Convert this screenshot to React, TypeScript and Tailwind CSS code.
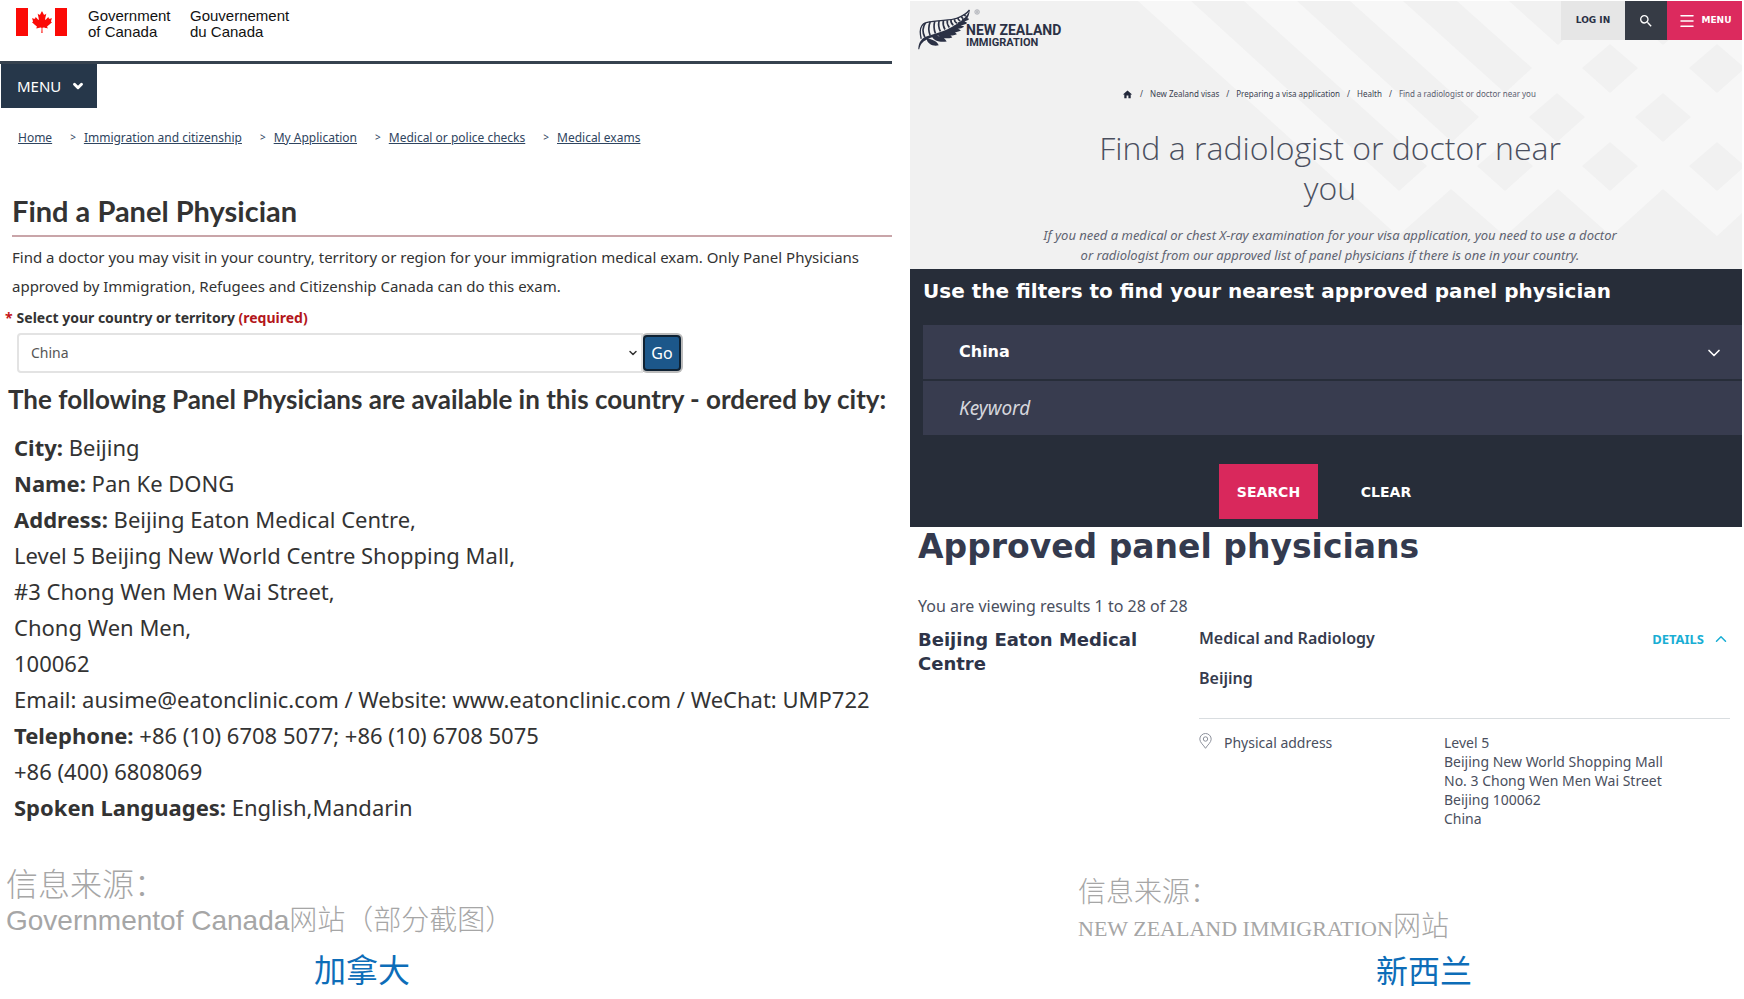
import React from "react"
import { FaCanadianMapleLeaf } from "react-icons/fa"
import { MdHome, MdSearch } from "react-icons/md"
import { ChevronDown, ChevronUp, Menu } from "lucide-react"

const canadaCrumbs = [
  "Home",
  "Immigration and citizenship",
  "My Application",
  "Medical or police checks",
  "Medical exams",
]

const nzCrumbs = ["New Zealand visas", "Preparing a visa application", "Health"]

const physician: { label?: string; value: string }[] = [
  { label: "City:", value: "Beijing" },
  { label: "Name:", value: "Pan Ke DONG" },
  { label: "Address:", value: "Beijing Eaton Medical Centre," },
  { value: "Level 5 Beijing New World Centre Shopping Mall," },
  { value: "#3 Chong Wen Men Wai Street," },
  { value: "Chong Wen Men," },
  { value: "100062" },
  { value: "Email: ausime@eatonclinic.com / Website: www.eatonclinic.com / WeChat: UMP722" },
  { label: "Telephone:", value: "+86 (10) 6708 5077; +86 (10) 6708 5075" },
  { value: "+86 (400) 6808069" },
  { label: "Spoken Languages:", value: "English,Mandarin" },
]

const nzAddress = [
  "Level 5",
  "Beijing New World Shopping Mall",
  "No. 3 Chong Wen Men Wai Street",
  "Beijing 100062",
  "China",
]

const CanadaFlag: React.FC = () => (
  <div className="flex h-7 w-[51px] justify-between">
    <div className="w-3 bg-[#fb0a06]" />
    <FaCanadianMapleLeaf className="mt-0.5 h-6 w-[22px] text-[#fb0a06]" />
    <div className="w-3 bg-[#fb0a06]" />
  </div>
)

const FernLogo: React.FC = () => (
  <svg className="h-[41px] w-[62px]" viewBox="0 0 186 124" fill="none" stroke="#2b3145">
    {/* stem and spine */}
    <path
      d="M0 122C1 105 6 94 18 86C40 76 70 72 100 55C130 38 150 22 155 2C157 22 142 42 112 62C80 80 50 80 26 92C12 99 6 108 3 122Z"
      fill="#2b3145"
      stroke="none"
    />
    {/* upper fronds */}
    <path d="M9 90C2 62 8 46 24 41C60 32 96 36 116 28C134 22 148 12 155 3" strokeWidth="4" />
    <path
      d="M22 42C12 56 14 74 20 86M36 39C30 54 32 70 36 80M50 37C46 50 48 64 52 74M63 36C60 48 62 58 67 68M76 35C74 45 76 54 81 62M88 34C86 42 89 49 94 56M99 33C98 39 101 45 106 49M110 31C109 36 112 40 117 43M120 27C120 31 123 34 127 36M130 22C131 26 133 28 136 29M139 16C140 19 142 21 144 21"
      strokeWidth="5"
    />
    {/* lower fronds */}
    <path
      d="M24 88C34 92 54 92 62 110C46 114 28 108 24 88ZM40 80C56 80 78 82 86 98C68 101 46 98 40 80ZM58 74C74 74 94 72 103 86C86 91 64 90 58 74ZM76 68C90 66 108 65 117 76C102 82 82 83 76 68ZM92 60C106 58 120 56 129 65C115 72 98 74 92 60ZM106 51C118 48 130 46 139 54C127 62 110 63 106 51ZM119 41C130 38 140 36 148 42C138 50 122 52 119 41ZM132 30C140 27 148 25 154 30C146 38 134 39 132 30Z"
      fill="#2b3145"
      stroke="none"
    />
    <circle cx="178" cy="9" r="7" strokeWidth="1.5" stroke="#7c808c" />
    <path d="M173 9H183M175 6H181M175 12H181" strokeWidth="1.5" stroke="#7c808c" />
  </svg>
)

/* woven lattice behind the hero title, anchored to the right edge */
const HeroPattern: React.FC = () => (
  <svg
    className="absolute inset-0 h-full w-full"
    viewBox="0 0 832 268"
    preserveAspectRatio="xMaxYMin slice"
    aria-hidden="true"
  >
    <path
      d="M228 0L488 235L541 188L595 235L648 188L701 235L753 188L807 235L832 212V0Z"
      fill="#f7f7f7"
    />
    <path
      d="M281 0H334L517 165L489 190Z M387 0H440L569 116L542 141Z M493 0H547L622 67L595 92Z M599 0H653L675 19L648 44Z"
      fill="#f1f1f1"
    />
    <path
      d="M700 43l28 24l-28 25l-28-25ZM807 43l28 24l-28 25l-28-25ZM647 92l28 24l-28 25l-28-25ZM753 92l28 24l-28 25l-28-25ZM595 141l28 24l-28 25l-28-25ZM700 141l28 24l-28 25l-28-25ZM807 141l28 24l-28 25l-28-25ZM753-5l28 24l-28 25l-28-25Z"
      fill="#f1f1f1"
    />
  </svg>
)

const CanadaPanel: React.FC = () => (
  <section className="font-['Noto_Sans',sans-serif] text-[#333333]">
    <header className="flex h-16 items-start gap-[21px] border-b-[3px] border-[#36424f] pt-2 pl-4 font-['Liberation_Sans',sans-serif] text-[15px] leading-4 text-[#111111]">
      <CanadaFlag />
      <p className="w-[81px]">
        Government
        <br />
        of Canada
      </p>
      <p>
        Gouvernement
        <br />
        du Canada
      </p>
    </header>

    <button className="ml-px flex h-11 w-24 items-center gap-2.5 bg-[#26374a] pl-4 text-[15px] text-white">
      MENU
      <ChevronDown className="h-3.5 w-3.5" strokeWidth={5} />
    </button>

    <nav className="mt-5 flex h-5 items-center pl-[18px] text-xs text-[#2f4560]">
      {canadaCrumbs.map((crumb, i) => (
        <React.Fragment key={crumb}>
          {i > 0 && <span className="mr-2 ml-[18px] text-[10px]">&gt;</span>}
          <a href="#" className="underline">
            {crumb}
          </a>
        </React.Fragment>
      ))}
    </nav>

    <h1 className="mt-[43px] ml-3 border-b-2 border-[#c9a5a9] pb-1 font-['Lato',sans-serif] text-[29px] leading-10 font-bold">
      Find a Panel Physician
    </h1>
    <p className="mt-1.5 ml-3 text-[15px] leading-[29px]">
      Find a doctor you may visit in your country, territory or region for your immigration medical exam. Only Panel Physicians
      approved by Immigration, Refugees and Citizenship Canada can do this exam.
    </p>

    <form className="mt-0.5 pl-[17px]" onSubmit={(e) => e.preventDefault()}>
      <label htmlFor="country" className="-ml-3 flex h-[30px] items-center gap-1 text-sm font-bold">
        <span className="text-[#c4161c]">*</span>
        <span>
          Select your country or territory <span className="text-[#b3161b]">(required)</span>
        </span>
      </label>
      <div className="flex items-center">
        <div className="relative w-[626px]">
          <select
            id="country"
            defaultValue="China"
            className="h-10 w-full appearance-none rounded-l border-2 border-[#e3e3e3] bg-white pl-3 text-sm text-[#555555]"
          >
            <option>China</option>
          </select>
          <ChevronDown className="pointer-events-none absolute top-3.5 right-1 h-3 w-3" strokeWidth={3} />
        </div>
        <button
          type="submit"
          className="h-9 w-[38px] rounded-sm border-2 border-[#0f2233] bg-[#1c578a] text-base text-white ring-2 ring-[#bcbcbc]"
        >
          Go
        </button>
      </div>
    </form>

    <h2 className="mt-2 pl-2 font-['Lato',sans-serif] text-[26px] leading-9 font-bold">
      The following Panel Physicians are available in this country - ordered by city:
    </h2>
    <ul className="mt-3 pl-3.5 text-[22px] leading-9">
      {physician.map(({ label, value }) => (
        <li key={value}>
          {label && <strong>{label}</strong>} {value}
        </li>
      ))}
    </ul>

    <footer className="mt-[42px] pl-1.5 font-['Liberation_Sans','Noto_Sans_CJK_SC',sans-serif] text-[28px] leading-9 font-light text-[#a6a6a6]">
      <p className="text-[32px]">信息来源：</p>
      <p>Governmentof Canada网站（部分截图）</p>
      <p className="mt-2 pl-[308px] text-[32px] leading-12 font-normal text-[#0d6db8]">加拿大</p>
    </footer>
  </section>
)

const NewZealandPanel: React.FC = () => (
  <section className="pt-px pr-0.5 font-['Noto_Sans',sans-serif] text-[#4a4f5e]">
    <div className="relative h-[268px] bg-[#f1f1f1]">
      <HeroPattern />
      <div className="relative">
        <div className="flex h-[77px] items-start justify-between">
          <a href="#" className="flex pt-2 pl-2 font-['Roboto',sans-serif] font-bold text-[#2b3145]">
            <FernLogo />
            <span className="-ml-3.5 pt-[15px]">
              <span className="block text-sm leading-[13px]">NEW ZEALAND</span>
              <span className="block text-[11px] leading-[11px]">IMMIGRATION</span>
            </span>
          </a>
          <div className="flex h-[39px] font-['DejaVu_Sans',sans-serif] text-[9px] font-bold">
            <button className="w-16 bg-[#e6e6e6] text-[#2b3145]">LOG IN</button>
            <button aria-label="Search" className="flex w-[42px] items-center justify-center bg-[#363b45] text-white">
              <MdSearch className="h-4 w-4" />
            </button>
            <button className="flex w-[75px] items-center justify-center gap-1.5 bg-[#dc2a5e] text-white">
              <Menu className="h-[18px] w-[18px]" strokeWidth={2} />
              MENU
            </button>
          </div>
        </div>

        <nav className="flex h-8 items-center justify-center gap-[7px] pl-1.5 text-[8px] text-[#3a3f50]">
          <a href="#" aria-label="Home">
            <MdHome className="h-[11px] w-[11px] text-[#22283a]" />
          </a>
          {nzCrumbs.map((crumb) => (
            <React.Fragment key={crumb}>
              <span>/</span>
              <a href="#">{crumb}</a>
            </React.Fragment>
          ))}
          <span>/</span>
          <span className="text-[#5b6070]">Find a radiologist or doctor near you</span>
        </nav>

        <h1 className="mx-auto mt-[18px] max-w-[520px] pl-2 text-center font-['Open_Sans',sans-serif] text-[32px] leading-10 font-light text-[#4a4f5e]">
          Find a radiologist or doctor near you
        </h1>
        <p className="mx-auto mt-[17px] max-w-[600px] pl-2 text-center text-[13px] leading-5 text-[#5f6472] italic">
          If you need a medical or chest X-ray examination for your visa application, you need to use a doctor
          <br />
          or radiologist from our approved list of panel physicians if there is one in your country.
        </p>
      </div>
    </div>

    <form
      className="bg-[#272d39] pt-2 pb-2 pl-[13px] font-['DejaVu_Sans',sans-serif] text-white"
      onSubmit={(e) => e.preventDefault()}
    >
      <h2 className="text-xl leading-7 font-bold">Use the filters to find your nearest approved panel physician</h2>
      <div className="relative mt-5">
        <select
          aria-label="Country"
          defaultValue="China"
          className="h-[54px] w-full appearance-none bg-[#383c4f] pl-9 text-base font-bold"
        >
          <option>China</option>
        </select>
        <ChevronDown className="pointer-events-none absolute top-[18px] right-[18px] h-5 w-5" />
      </div>
      <input
        type="text"
        aria-label="Keyword"
        placeholder="Keyword"
        className="mt-0.5 block h-[54px] w-full bg-[#383c4f] pl-9 font-['Noto_Sans',sans-serif] text-[19px] italic placeholder:text-[#d5d6dc]"
      />
      <div className="mt-[29px] flex h-[55px] justify-center pl-2 text-sm font-bold">
        <button type="submit" className="w-[99px] bg-[#d9285c]">
          SEARCH
        </button>
        <button type="reset" className="w-[136px]">
          CLEAR
        </button>
      </div>
    </form>

    <div className="pr-3 pl-2">
      <h2 className="pt-px font-['DejaVu_Sans',sans-serif] text-[33px] leading-[38px] font-bold text-[#343a4e]">
        Approved panel physicians
      </h2>
      <p className="mt-7 text-base leading-6">You are viewing results 1 to 28 of 28</p>
      <article className="mt-2 flex">
        <h3 className="w-[281px] shrink-0 pt-0.5 pr-10 font-['DejaVu_Sans',sans-serif] text-lg leading-6 font-bold text-[#2e3448]">
          Beijing Eaton Medical Centre
        </h3>
        <div className="grow">
          <div className="flex justify-between border-b border-[#d9dde0] pb-7 text-base leading-6 font-semibold text-[#363b4d]">
            <div>
              <p>Medical and Radiology</p>
              <p className="mt-4">Beijing</p>
            </div>
            <button className="flex h-6 items-center gap-2 pt-0.5 text-[13px] font-bold text-[#19aed4]">
              DETAILS
              <ChevronUp className="h-[18px] w-[18px]" />
            </button>
          </div>
          <div className="flex pt-3.5 text-sm leading-[19px]">
            <svg className="mr-3 h-4 w-[13px]" viewBox="0 0 13 16" fill="none" stroke="#8d919c">
              <path d="M6.5 15.3C4.5 12 .8 9.4 .8 6.2A5.7 5.7 0 0 1 12.2 6.2C12.2 9.4 8.5 12 6.5 15.3Z" />
              <circle cx="6.5" cy="6" r="2.2" />
            </svg>
            <p className="w-[220px]">Physical address</p>
            <address className="not-italic">
              {nzAddress.map((line) => (
                <span key={line} className="block">
                  {line}
                </span>
              ))}
            </address>
          </div>
        </div>
      </article>
    </div>

    <footer className="mt-12 pl-[168px] font-['Liberation_Serif','Noto_Sans_CJK_SC',serif] text-[28px] leading-[34px] font-light text-[#a6a6a6]">
      <p>信息来源：</p>
      <p>
        <span className="text-[22px]">NEW ZEALAND IMMIGRATION</span>网站
      </p>
      <p className="mt-0.5 pl-[298px] text-[32px] leading-12 font-normal text-[#0d6db8]">新西兰</p>
    </footer>
  </section>
)

export default function App() {
  return (
    <main className="grid grid-cols-[892fr_834fr] gap-x-[18px] bg-white">
      <CanadaPanel />
      <NewZealandPanel />
    </main>
  )
}
